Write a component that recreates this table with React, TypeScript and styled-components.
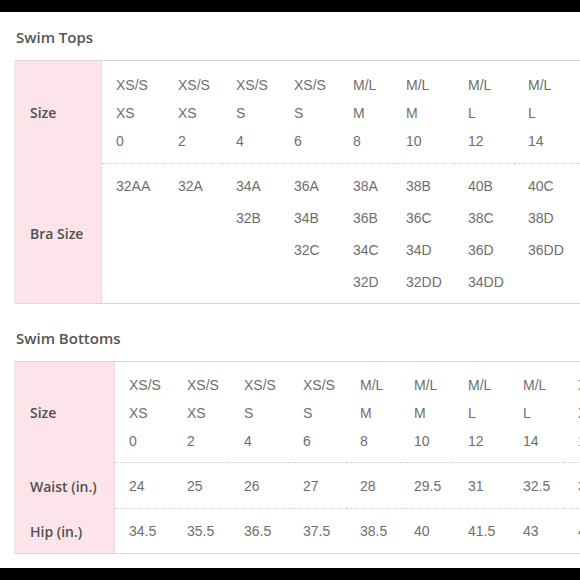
import React from "react";
import styled, { createGlobalStyle } from "styled-components";

const Global = createGlobalStyle`
  html, body { margin: 0; padding: 0; background: #000; }
  * { box-sizing: border-box; }
`;

const Frame = styled.div`
  width: 580px;
  height: 580px;
  overflow: hidden;
  background: #fff;
  border-top: 12px solid #000;
  border-bottom: 12px solid #000;
  padding: 15px 0 0 14px;
  display: flex;
  flex-direction: column;
  gap: 24px;
`;

const Section = styled.section`
  display: flex;
  flex-direction: column;
  gap: 13px;
`;

const Heading = styled.h2`
  margin: 0 0 0 2px;
  font-family: "Open Sans", "Liberation Sans", sans-serif;
  font-weight: 600;
  font-size: 15px;
  line-height: 20px;
  color: #555;
  white-space: nowrap;
`;

const Table = styled.div`
  display: flex;
  flex-direction: column;
  width: 700px;
  border-top: 1px solid #d8d8d8;
  border-bottom: 1px solid #d8d8d8;
  border-left: 1px solid #ececec;
`;

const Row = styled.div<{ $cols: string }>`
  display: grid;
  grid-template-columns: ${(p) => p.$cols};
`;

const LabelCell = styled.div`
  background: #fde4ea;
  border-right: 1px solid #f4d3dc;
  display: flex;
  align-items: center;
  padding-left: 15px;
  font-family: "Open Sans", "Liberation Sans", sans-serif;
  font-weight: 600;
  font-size: 14px;
  color: #505050;
  white-space: nowrap;
`;

const ValueCell = styled.div<{ $lh: number; $pt: number; $pb: number; $last?: boolean }>`
  display: flex;
  flex-direction: column;
  padding: ${(p) => p.$pt}px 0 ${(p) => p.$pb}px 14px;
  border-bottom: ${(p) => (p.$last ? "none" : "1px dotted #cfcfcf")};
  font-family: "Liberation Sans", Arial, sans-serif;
  font-size: 14px;
  line-height: ${(p) => p.$lh}px;
  color: #6e6e6e;
  white-space: nowrap;
`;

type RowSpec = {
  label: string;
  lh: number;
  pt: number;
  pb: number;
  values: string[][];
};

type TableSpec = {
  title: string;
  labelWidth: number;
  widths: number[];
  rows: RowSpec[];
};

const tables: TableSpec[] = [
  {
    title: "Swim Tops",
    labelWidth: 87,
    widths: [62, 58, 58, 59, 53, 62, 60, 100],
    rows: [
      {
        label: "Size",
        lh: 28,
        pt: 10,
        pb: 8,
        values: [
          ["XS/S", "XS", "0"],
          ["XS/S", "XS", "2"],
          ["XS/S", "S", "4"],
          ["XS/S", "S", "6"],
          ["M/L", "M", "8"],
          ["M/L", "M", "10"],
          ["M/L", "L", "12"],
          ["M/L", "L", "14"],
        ],
      },
      {
        label: "Bra Size",
        lh: 32,
        pt: 6,
        pb: 5,
        values: [
          ["32AA"],
          ["32A"],
          ["34A", "32B"],
          ["36A", "34B", "32C"],
          ["38A", "36B", "34C", "32D"],
          ["38B", "36C", "34D", "32DD"],
          ["40B", "38C", "36D", "34DD"],
          ["40C", "38D", "36DD"],
        ],
      },
    ],
  },
  {
    title: "Swim Bottoms",
    labelWidth: 100,
    widths: [58, 57, 59, 57, 54, 54, 55, 55, 55],
    rows: [
      {
        label: "Size",
        lh: 28,
        pt: 9,
        pb: 7,
        values: [
          ["XS/S", "XS", "0"],
          ["XS/S", "XS", "2"],
          ["XS/S", "S", "4"],
          ["XS/S", "S", "6"],
          ["M/L", "M", "8"],
          ["M/L", "M", "10"],
          ["M/L", "L", "12"],
          ["M/L", "L", "14"],
          ["XL/XXL", "XL", "16"],
        ],
      },
      {
        label: "Waist (in.)",
        lh: 28,
        pt: 9,
        pb: 8,
        values: [["24"], ["25"], ["26"], ["27"], ["28"], ["29.5"], ["31"], ["32.5"], ["34"]],
      },
      {
        label: "Hip (in.)",
        lh: 28,
        pt: 8,
        pb: 8,
        values: [["34.5"], ["35.5"], ["36.5"], ["37.5"], ["38.5"], ["40"], ["41.5"], ["43"], ["44.5"]],
      },
    ],
  },
];

export default function App() {
  return (
    <>
      <Global />
      <Frame>
        {tables.map((t) => {
          const cols = [t.labelWidth, ...t.widths].map((w) => `${w}px`).join(" ");
          return (
            <Section key={t.title}>
              <Heading>{t.title}</Heading>
              <Table>
                {t.rows.map((r, ri) => (
                  <Row key={r.label} $cols={cols}>
                    <LabelCell>{r.label}</LabelCell>
                    {r.values.map((lines, ci) => (
                      <ValueCell
                        key={ci}
                        $lh={r.lh}
                        $pt={r.pt}
                        $pb={r.pb}
                        $last={ri === t.rows.length - 1}
                      >
                        {lines.map((l, li) => (
                          <span key={li}>{l}</span>
                        ))}
                      </ValueCell>
                    ))}
                  </Row>
                ))}
              </Table>
            </Section>
          );
        })}
      </Frame>
    </>
  );
}
